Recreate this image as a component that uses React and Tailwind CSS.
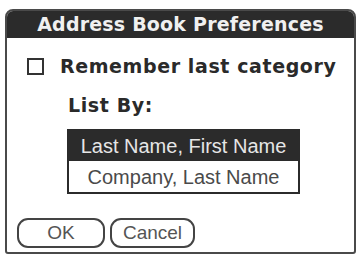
import React from 'react';

export default function App() {
  return (
    <div className="w-[359px] h-[257px] bg-white pt-[9px] pl-[5px]" style={{ fontFamily: '"DejaVu Sans", sans-serif' }}>
      <div className="w-[351px] h-[245px] border-2 border-[#4a4a4a] rounded-tl-[8px] rounded-tr-[8px] rounded-b-[3px] flex flex-col overflow-hidden">
        <div className="h-[27px] bg-[#2b2b2b] flex items-center justify-center">
          <span className="text-[#f0f0f0] text-[19px] font-bold tracking-[0.2px] leading-none">Address Book Preferences</span>
        </div>
        <div className="flex-1 flex flex-col">
          <div className="flex items-center mt-[19px] ml-[20px]">
            <div className="w-[17px] h-[17px] border-2 border-[#333]" />
            <span className="ml-[16px] text-[19px] font-bold text-[#2a2a2a] leading-none tracking-[0.6px]">Remember last category</span>
          </div>
          <div className="ml-[61px] mt-[20px] text-[19px] font-bold text-[#2a2a2a] leading-none tracking-[0.6px]">List By:</div>
          <div className="ml-[60px] mt-[14px] w-[233px] border-2 border-[#2b2b2b] flex flex-col" style={{ fontFamily: '"Liberation Sans", sans-serif' }}>
            <div className="h-[30px] bg-[#2b2b2b] text-[#e6e6e6] flex items-center justify-center text-[20px]">Last Name, First Name</div>
            <div className="h-[31px] bg-white text-[#4a4a4a] flex items-center justify-center text-[20px]">Company, Last Name</div>
          </div>
          <div className="flex gap-[5px] ml-[10px] mt-[24px]" style={{ fontFamily: '"Liberation Sans", sans-serif' }}>
            <div className="w-[88px] h-[30px] border-2 border-[#444] rounded-[11px] flex items-center justify-center text-[19px] text-[#555]">OK</div>
            <div className="w-[85px] h-[30px] border-2 border-[#444] rounded-[11px] flex items-center justify-center text-[19px] text-[#555]">Cancel</div>
          </div>
        </div>
      </div>
    </div>
  );
}
